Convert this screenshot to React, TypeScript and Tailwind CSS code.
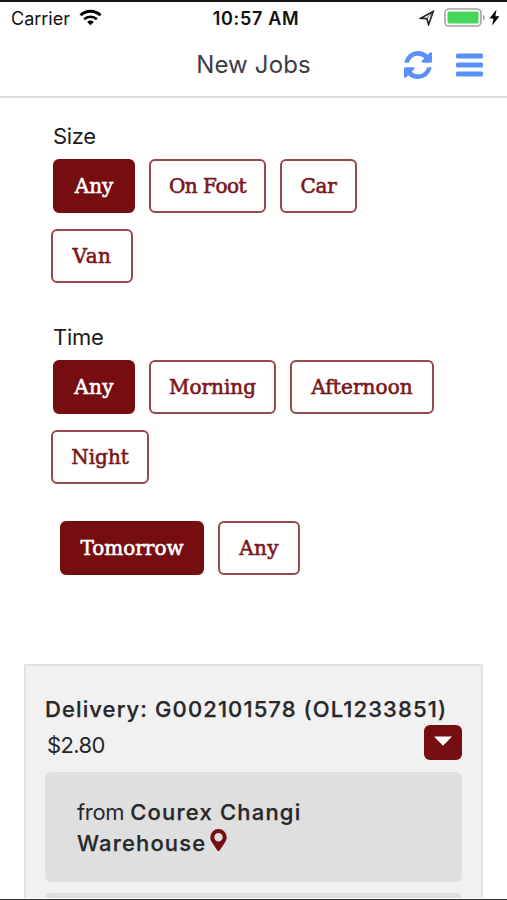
import clsx from "clsx";

interface Option {
  label: string;
  className: string;
  active?: boolean;
}

const sizeOptions: Option[] = [
  { label: "Any", className: "w-[82px]", active: true },
  { label: "On Foot", className: "w-[117px] tracking-[-0.5px]" },
  { label: "Car", className: "w-[77px] tracking-[-0.3px]" },
  { label: "Van", className: "w-[82px] -ml-0.5 tracking-[0.5px]" },
];

const timeOptions: Option[] = [
  { label: "Any", className: "w-[82px] tracking-[0.3px]", active: true },
  { label: "Morning", className: "w-[127px]" },
  { label: "Afternoon", className: "w-[144px] tracking-[0.1px]" },
  { label: "Night", className: "w-[98px] -ml-0.5" },
];

const dayOptions: Option[] = [
  { label: "Tomorrow", className: "w-[144px]", active: true },
  { label: "Any", className: "w-[82px] tracking-[0.3px]" },
];

function OptionButton({ label, className, active }: Option) {
  return (
    <button
      className={clsx(
        "h-[54px] shrink-0 rounded-md border-2 text-center font-['DejaVu_Serif',serif] text-[20px] font-normal whitespace-nowrap [-webkit-text-stroke:0.6px]",
        active ? "border-[#760d10] bg-[#760d10] text-white" : "border-[#96484c] bg-white text-[#7b171a]",
        className
      )}
    >
      {label}
    </button>
  );
}

function OptionGroup({ title, options }: { title: string; options: Option[] }) {
  return (
    <section className="h-[201px] pl-[53px]">
      <h2 className="h-[35px] text-[22px] leading-[25px] tracking-[-0.3px] text-[#1c1c1e]">{title}</h2>
      <div className="flex flex-wrap gap-x-[14px] gap-y-4 pr-16">
        {options.map((option) => (
          <OptionButton key={option.label} {...option} />
        ))}
      </div>
    </section>
  );
}

function RefreshIcon() {
  return (
    <svg width="28" height="28" viewBox="0 0 1536 1536" fill="#5b91f7">
      <path d="M1511 928q0 5-1 7-64 268-268 434.5T764 1536q-146 0-282.5-55T238 1324l-129 129q-19 19-45 19t-45-19-19-45V960q0-26 19-45t45-19h448q26 0 45 19t19 45-19 45l-137 137q71 66 161 102t187 36q134 0 250-65t186-179q11-17 53-117 8-23 30-23h192q13 0 22.5 9.5t9.5 22.5zm25-800v448q0 26-19 45t-45 19h-448q-26 0-45-19t-19-45 19-45l138-138Q969 256 768 256q-134 0-250 65T332 500q-11 17-53 117-8 23-30 23H50q-13 0-22.5-9.5T18 608v-7q65-268 270-434.5T768 0q146 0 284 55.5T1297 212l130-129q19-19 45-19t45 19 19 45z" />
    </svg>
  );
}

function PinIcon() {
  return (
    <svg className="mt-px ml-1" width="17" height="22" viewBox="0 0 17 22">
      <path
        d="M8.5 0A8.2 8.2 0 0 0 .3 8.2c0 2.6 1.2 4.3 2.6 6.5l4.5 6.7c.5.8 1.7.8 2.2 0l4.5-6.7c1.4-2.2 2.6-3.9 2.6-6.5A8.2 8.2 0 0 0 8.5 0zm0 4a4.2 4.2 0 1 1 0 8.4 4.2 4.2 0 0 1 0-8.4z"
        fill="#760d10"
        fillRule="evenodd"
      />
    </svg>
  );
}

function StatusBar() {
  return (
    <div className="grid h-[31px] grid-cols-3 items-center text-[18px] text-[#111]">
      <div className="flex items-center gap-[9px] pl-[11px]">
        <span className="pt-px">Carrier</span>
        <svg width="23" height="17" viewBox="0 0 23 17" fill="none" stroke="#000">
          <path d="M1.5 6.3a14.3 14.3 0 0 1 20 0" strokeWidth="3" />
          <path d="M5.2 10.3a9 9 0 0 1 12.6 0" strokeWidth="2.7" />
          <path d="M11.5 16.2l-3.3-3.3a4.7 4.7 0 0 1 6.6 0z" fill="#000" stroke="none" />
        </svg>
      </div>
      <span className="pt-px pl-[5px] text-center font-semibold tracking-[0.65px] whitespace-nowrap">10:57 AM</span>
      <div className="flex items-center justify-end pr-[7px]">
        <svg className="mr-[9px]" width="16" height="16" viewBox="0 0 16 16" fill="none" stroke="#222" strokeWidth="1.6">
          <path d="M14.2 1.5L1.6 8.2l6.2.4 1.8 6z" />
          <path d="M14.2 1.5L7.8 8.6" strokeWidth="0.7" />
        </svg>
        <svg width="42" height="19" viewBox="0 0 42 19">
          <rect x="1" y="1" width="36" height="17" rx="4" fill="#fff" stroke="#a3a3a3" strokeWidth="1.6" />
          <rect x="3.5" y="3.5" width="31" height="12" rx="1.5" fill="#46d65a" />
          <path d="M39 6.7c2.4.8 2.4 4.8 0 5.6z" fill="#a3a3a3" />
        </svg>
        <svg className="ml-[3px]" width="11" height="17" viewBox="0 0 11 17">
          <path d="M7.5.5L.5 9.5h4L3.2 16.5l7.3-9.3H6.3z" fill="#000" />
        </svg>
      </div>
    </div>
  );
}

function NavBar() {
  return (
    <header className="grid h-[65px] grid-cols-3 items-center border-b-2 border-[#dcdcdc]">
      <h1 className="col-start-2 text-center text-[24px] tracking-[0.15px] whitespace-nowrap text-[#3b3d49]">New Jobs</h1>
      <div className="flex items-center justify-end gap-6 pr-6">
        <RefreshIcon />
        <svg width="27" height="24" viewBox="0 0 27 24" fill="#5b91f7">
          <rect width="27" height="5" rx="1.5" y="0.5" />
          <rect width="27" height="5" rx="1.5" y="9.5" />
          <rect width="27" height="5" rx="1.5" y="18.5" />
        </svg>
      </div>
    </header>
  );
}

function JobCard() {
  return (
    <article className="mx-6 h-[234px] border-2 border-b-0 border-[#e2e2e2] bg-[#f1f1f1] px-[19px] pt-[29px] text-[#272729]">
      <h3 className="h-[30px] text-[22px] leading-[28px] font-medium tracking-[1.1px] whitespace-nowrap [-webkit-text-stroke:0.25px]">
        Delivery: G002101578 (OL1233851)
      </h3>
      <div className="flex h-[47px] justify-between">
        <span className="pt-[7px] pl-[2px] text-[22px] leading-[26px] tracking-[-0.6px]">$2.80</span>
        <button className="flex h-[35px] w-[38px] justify-center rounded-md bg-[#760d10] pt-[11px]" aria-label="Expand">
          <svg width="18" height="10" viewBox="0 0 18 10" fill="#fff">
            <path d="M0 .5h18L9 9.7z" />
          </svg>
        </button>
      </div>
      <div className="h-[110px] rounded-md bg-[#dfdfdf] px-8 pt-[25px] text-[22px] leading-[31px]">
        <p>
          <span className="tracking-[-0.3px]">from </span>
          <strong className="font-medium tracking-[1.2px] [-webkit-text-stroke:0.25px]">Courex Changi</strong>
        </p>
        <p className="flex">
          <strong className="font-medium tracking-[1.15px] [-webkit-text-stroke:0.25px]">Warehouse</strong>
          <PinIcon />
        </p>
      </div>
      <div className="mt-[11px] h-[5px] rounded-t-md bg-[#dfdfdf]" />
    </article>
  );
}

export default function App() {
  return (
    <div className="flex h-[900px] w-[507px] flex-col overflow-hidden border-t-2 border-b border-t-[#151315] border-b-[#333] bg-white font-['Inter',sans-serif]">
      <StatusBar />
      <NavBar />
      <main className="pt-[26px]">
        <OptionGroup title="Size" options={sizeOptions} />
        <OptionGroup title="Time" options={timeOptions} />
        <div className="-mt-[5px] flex h-[143px] gap-[14px] pl-[60px]">
          {dayOptions.map((option) => (
            <OptionButton key={option.label} {...option} />
          ))}
        </div>
        <JobCard />
      </main>
    </div>
  );
}
